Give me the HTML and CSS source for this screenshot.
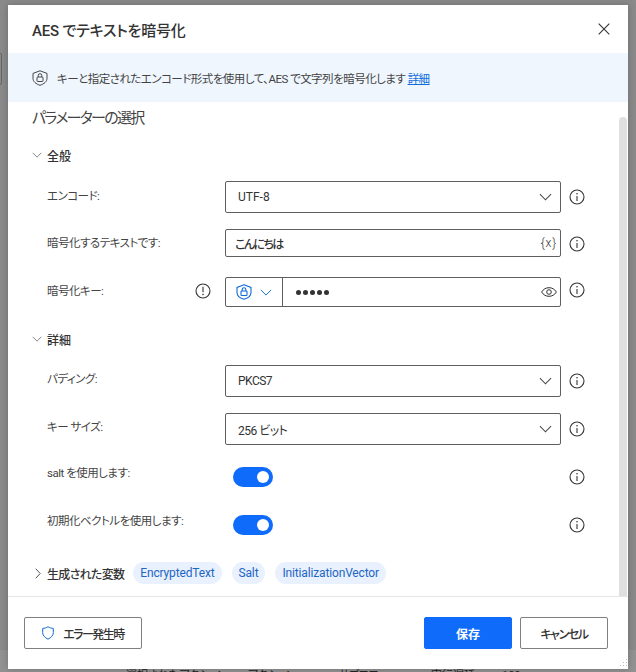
FILE: index.html
```html
<!DOCTYPE html>
<html lang="ja">
<head>
<meta charset="utf-8">
<title>AES でテキストを暗号化</title>
<link rel="stylesheet" href="styles.css">
</head>
<body>
<svg width="0" height="0" class="defs">
  <symbol id="info" viewBox="0 0 16 16"><circle cx="8" cy="8" r="7" fill="none" stroke="#333" stroke-width="1.1"/><path d="M8 7v5" stroke="#333" stroke-width="1.1"/><circle cx="8" cy="4.8" r=".8" fill="#333"/></symbol>
  <symbol id="chev" viewBox="0 0 14 8"><path d="M1 1l6 6 6-6" fill="none" stroke="currentColor" stroke-width="1.1"/></symbol>
</svg>
<div class="sliver"></div>
<div class="modal">
  <header class="head">
    <h1>AES でテキストを暗号化</h1>
    <svg class="close" width="12" height="12" viewBox="0 0 12 12"><path d="M.7.7l10.6 10.6M11.3.7L.7 11.3" stroke="#333" stroke-width="1.1"/></svg>
  </header>
  <div class="banner">
    <svg class="shield" width="16" height="16" viewBox="0 0 16 16"><path d="M8 .8l7 2.6v5c0 3.2-3 5.600-7 6.900-4-1.300-7-3.700-7-6.900v-5z" fill="none" stroke="#444" stroke-width="1"/><rect x="5" y="7" width="6" height="4.500" rx=".8" fill="none" stroke="#444"/><path d="M6.200 7V5.500a1.800 1.800 0 013.600 0V7" fill="none" stroke="#444"/></svg>
    <span>キーと指定されたエンコード形式を使用して、AES で文字列を暗号化します <a href="#">詳細</a></span>
  </div>
  <div class="scrollarea">
    <main class="content">
      <h2>パラメーターの選択</h2>
      <div class="section"><svg class="chev-s"><use href="#chev"/></svg><span>全般</span></div>
      <div class="row r-enc">
        <label>エンコード:</label>
        <div class="field select"><span>UTF-8</span><svg class="chev-l"><use href="#chev"/></svg></div>
        <svg class="info"><use href="#info"/></svg>
      </div>
      <div class="row r-text">
        <label>暗号化するテキストです:</label>
        <div class="field text"><span class="hello">こんにちは</span><span class="var">{x}</span></div>
        <svg class="info"><use href="#info"/></svg>
      </div>
      <div class="row r-key">
        <label>暗号化キー:</label>
        <svg class="warn" viewBox="0 0 16 16"><circle cx="8" cy="8" r="7" fill="none" stroke="#333" stroke-width="1.1"/><path d="M8 3.800v5.400" stroke="#333" stroke-width="1.1"/><circle cx="8" cy="11.500" r=".8" fill="#333"/></svg>
        <div class="field key">
          <div class="keytype">
            <svg width="16" height="16" viewBox="0 0 16 16"><path d="M8 .8l7 2.600v5c0 3.200-3 5.600-7 6.900-4-1.300-7-3.700-7-6.900v-5z" fill="none" stroke="#0f6cdc" stroke-width="1.100"/><rect x="5" y="7" width="6" height="4.500" rx=".8" fill="none" stroke="#0f6cdc" stroke-width="1.100"/><path d="M6.200 7V5.500a1.800 1.800 0 013.600 0V7" fill="none" stroke="#0f6cdc" stroke-width="1.100"/></svg>
            <svg class="chev-b"><use href="#chev"/></svg>
          </div>
          <div class="dots"><i></i><i></i><i></i><i></i><i></i></div>
          <svg class="eye" width="16" height="10" viewBox="0 0 16 10"><path d="M.6 5C2.500 2 5 .7 8 .7S13.500 2 15.400 5C13.500 8 11 9.300 8 9.300S2.500 8 .6 5z" fill="none" stroke="#333"/><circle cx="8" cy="5" r="2.300" fill="none" stroke="#333"/></svg>
        </div>
        <svg class="info"><use href="#info"/></svg>
      </div>
      <div class="section s2"><svg class="chev-s"><use href="#chev"/></svg><span>詳細</span></div>
      <div class="row r-enc r-adv">
        <label>パディング:</label>
        <div class="field select plain"><span>PKCS7</span><svg class="chev-l"><use href="#chev"/></svg></div>
        <svg class="info"><use href="#info"/></svg>
      </div>
      <div class="row r-enc r-adv">
        <label>キー サイズ:</label>
        <div class="field select plain"><span>256 ビット</span><svg class="chev-l"><use href="#chev"/></svg></div>
        <svg class="info"><use href="#info"/></svg>
      </div>
      <div class="row r-tog first">
        <label>salt を使用します:</label>
        <div class="toggle"></div>
        <svg class="info"><use href="#info"/></svg>
      </div>
      <div class="row r-tog">
        <label>初期化ベクトルを使用します:</label>
        <div class="toggle"></div>
        <svg class="info"><use href="#info"/></svg>
      </div>
      <div class="vars">
        <svg class="chev-r" width="6" height="11" viewBox="0 0 6 11"><path d="M.7.7l4.500 4.800L.7 10.300" fill="none" stroke="#555"/></svg>
        <span class="vars-title">生成された変数</span>
        <span class="chip">EncryptedText</span>
        <span class="chip">Salt</span>
        <span class="chip">InitializationVector</span>
      </div>
    </main>
    <div class="scrollbar"></div>
  </div>
  <footer class="foot">
    <button class="btn err"><svg width="12" height="14" viewBox="0 0 12 14"><path d="M6 .7c1.500 1.100 3.300 1.600 5.300 1.700v4.300c0 2.800-2.200 4.900-5.300 6.500C2.900 11.600.7 9.500.7 6.700V2.400C2.700 2.300 4.500 1.800 6 .7z" fill="none" stroke="#0f6cdc"/></svg><span>エラー発生時</span></button>
    <span class="spacer"></span>
    <button class="btn primary">保存</button>
    <button class="btn cancel">キャンセル</button>
  </footer>
  <svg class="grip" width="9" height="9" viewBox="0 0 9 9" fill="#bbb"><rect x="7" y="0" width="1" height="1"/><rect x="4" y="3" width="1" height="1"/><rect x="7" y="3" width="1" height="1"/><rect x="1" y="6" width="1" height="1"/><rect x="4" y="6" width="1" height="1"/><rect x="7" y="6" width="1" height="1"/></svg>
</div>
<div class="behind"><span>選択されたアクション</span><span>アクション</span><span>サブフロー</span><span>実行遅延</span><span>100</span></div>
</body>
</html>
```
FILE: styles.css
```css
* { box-sizing: border-box; }
html, body { height: 100%; }
body {
  margin: 0;
  background: linear-gradient(#8a8a8a 650px, #929292 650px);
  font-family: Roboto, "Noto Sans CJK JP", sans-serif;
  font-feature-settings: "palt";
  color: #333;
  overflow: hidden;
  padding: 5px 8px 0;
}
.defs { position: absolute; }
.sliver {
  position: absolute; left: -4px; top: 53px;
  width: 6px; height: 32px;
  border: 1px solid #666;
  border-radius: 2px;
}
.modal {
  position: relative;
  width: 620px;
  height: 664px;
  background: #fff;
  display: flex;
  flex-direction: column;
  box-shadow: 0 0 7px rgba(0,0,0,.22);
}
.grip { position: absolute; right: 0; bottom: 1px; }
.behind {
  display: flex;
  font-size: 11px;
  line-height: 14px;
  white-space: nowrap;
  padding-left: 118px;
  color: #222;
}
.behind span:nth-child(1) { width: 122px; }
.behind span:nth-child(2) { width: 91px; }
.behind span:nth-child(3) { width: 92px; }
.behind span:nth-child(4) { width: 71px; }
.head {
  height: 48px;
  flex: none;
  display: flex;
  align-items: center;
  justify-content: space-between;
  padding: 0 18px 0 24px;
}
.head h1 { margin: 0; font-size: 15px; font-weight: 500; color: #333; letter-spacing: -.2px; }
.banner {
  height: 49px;
  flex: none;
  background: #eff6fe;
  display: flex;
  align-items: center;
  gap: 9px;
  padding: 0 24px;
  font-size: 11.5px;
  letter-spacing: -.52px;
  color: #444;
}
.banner a { color: #0f6cdc; }
.scrollarea {
  flex: 1;
  display: flex;
  border-bottom: 1px solid #e6e6e6;
  min-height: 0;
}
.content { flex: 1; padding: 5px 0 0 24px; min-width: 0; }
.scrollbar {
  width: 8px;
  margin: 15px 1px 0 0;
  background: #e0e0de;
  border-radius: 4px 4px 0 0;
}
h2 { margin: 0 0 16px; font-size: 15px; font-weight: 400; color: #444; line-height: 22px; letter-spacing: -1.7px; }
.section {
  display: flex;
  align-items: center;
  height: 20px;
  font-size: 12px;
  font-weight: 500;
  color: #333;
  margin-bottom: 16px;
}
.section.s2 { margin: 22px 0 16px; }
.chev-s { width: 10px; height: 6px; color: #666; margin-right: 5px; }
.row {
  display: grid;
  grid-template-columns: 178px 336px 30px;
  align-items: center;
  padding-left: 15px;
  font-size: 12px;
  position: relative;
  margin-bottom: 16px;
}
.row label { color: #444; position: relative; top: -2px; font-size: 11.500px; letter-spacing: -.5px; }
.r-text { margin-bottom: 20px; }
.r-text label { top: -1px; }
.r-text .info { position: relative; top: 1px; }
.r-key .info { position: relative; top: -2px; }
.r-adv label { top: -3px; }
.r-tog label { top: -5px; }
.info { width: 16px; height: 16px; justify-self: center; margin-left: 1px; }
.warn { width: 16px; height: 16px; position: absolute; left: 163px; top: 6px; }
.field {
  border: 1px solid #5f5f5f;
  border-radius: 2px;
  display: flex;
  align-items: center;
  background: #fff;
  color: #333;
  font-size: 12px;
}
.select { height: 32px; padding: 0 8px 0 12px; justify-content: space-between; }
.select.plain span { letter-spacing: -.5px; }
.chev-l { width: 13px; height: 8px; color: #444; }
.text { height: 28px; padding: 0 3px 0 9px; justify-content: space-between; }
.hello { letter-spacing: -1.600px; font-weight: 500; }
.var { font-size: 12px; font-weight: 300; letter-spacing: .8px; color: #333; }
.key { height: 30px; }
.keytype { width: 57px; height: 100%; border-right: 1px solid #5f5f5f; display: flex; align-items: center; gap: 8px; padding-left: 10px; flex: none; }
.chev-b { width: 12px; height: 7px; color: #0f6cdc; }
.dots { flex: 1; display: flex; gap: 2px; padding-left: 13px; }
.dots i { width: 5px; height: 5px; border-radius: 50%; background: #333; }
.eye { margin-right: 3px; }
.toggle {
  width: 40px; height: 20px; margin-left: 8px;
  background: #0f6cfb;
  border-radius: 10px;
  position: relative;
}
.toggle::after {
  content: "";
  position: absolute; right: 4px; top: 4px;
  width: 12px; height: 12px; border-radius: 50%; background: #fff;
}
.r-tog { margin-bottom: 28px; }
.r-tog.first { margin-top: 22px; }
.vars { display: flex; align-items: center; height: 22px; font-size: 12px; margin-top: -1px; }
.chev-r { margin: 0 6px 0 3px; }
.vars-title { font-weight: 500; color: #333; margin-right: 9px; letter-spacing: -.7px; }
.chip { background: #e8f1fd; color: #1e66c4; border-radius: 11px; padding: 0 7px; height: 22px; line-height: 22px; margin-right: 10px; letter-spacing: -.15px; }
.foot {
  height: 72px;
  flex: none;
  display: flex;
  align-items: flex-start;
  padding: 20px 20px 0 16px;
  gap: 8px;
}
.spacer { flex: 1; }
.btn {
  height: 32px;
  font: 500 12px Roboto, "Noto Sans CJK JP", sans-serif;
  font-feature-settings: "palt";
  border: 1px solid #7f7f7f;
  border-radius: 2px;
  background: #fff;
  color: #333;
  width: 88px;
}
.err { width: 118px; display: flex; align-items: center; justify-content: center; gap: 9px; letter-spacing: -1.500px; }
.cancel { letter-spacing: -1.400px; }
.primary { background: #0f6cfb; border-color: #0f6cfb; color: #fff; font-weight: 700; }
```
